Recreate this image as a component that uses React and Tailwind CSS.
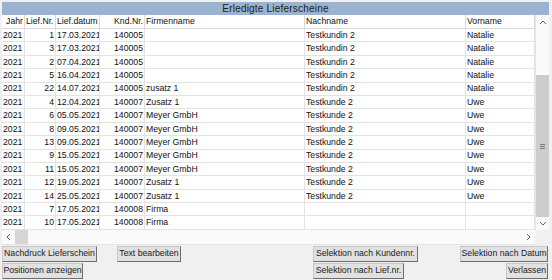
import React from "react";

const rows = [
  ["2021", "1", "17.03.2021", "140005", "", "Testkundin 2", "Natalie"],
  ["2021", "3", "17.03.2021", "140005", "", "Testkundin 2", "Natalie"],
  ["2021", "2", "07.04.2021", "140005", "", "Testkundin 2", "Natalie"],
  ["2021", "5", "16.04.2021", "140005", "", "Testkundin 2", "Natalie"],
  ["2021", "22", "14.07.2021", "140005", "zusatz 1", "Testkundin 2", "Natalie"],
  ["2021", "4", "12.04.2021", "140007", "Zusatz 1", "Testkunde 2", "Uwe"],
  ["2021", "6", "05.05.2021", "140007", "Meyer GmbH", "Testkunde 2", "Uwe"],
  ["2021", "8", "09.05.2021", "140007", "Meyer GmbH", "Testkunde 2", "Uwe"],
  ["2021", "13", "09.05.2021", "140007", "Meyer GmbH", "Testkunde 2", "Uwe"],
  ["2021", "9", "15.05.2021", "140007", "Meyer GmbH", "Testkunde 2", "Uwe"],
  ["2021", "11", "15.05.2021", "140007", "Meyer GmbH", "Testkunde 2", "Uwe"],
  ["2021", "12", "19.05.2021", "140007", "Zusatz 1", "Testkunde 2", "Uwe"],
  ["2021", "14", "25.05.2021", "140007", "Zusatz 1", "Testkunde 2", "Uwe"],
  ["2021", "7", "17.05.2021", "140008", "Firma", "", ""],
  ["2021", "10", "17.05.2021", "140008", "Firma", "", ""],
];

const headers = ["Jahr", "Lief.Nr.", "Lief.datum", "Knd.Nr.", "Firmenname", "Nachname", "Vorname"];
const headAlign = ["justify-end", "justify-start", "justify-start", "justify-end", "justify-start", "justify-start", "justify-start"];
const cellAlign = ["justify-start", "justify-end", "justify-start", "justify-end", "justify-start", "justify-start", "justify-start"];

function Btn({ children, className = "" }) {
  return (
    <div
      className={
        "h-[16px] flex items-center justify-center bg-[#e1e1e1] border border-t-[#c8c8c8] border-l-[#c8c8c8] border-r-[#6e6e6e] border-b-[#6e6e6e] text-[8.7px] text-[#1a1a1a] whitespace-nowrap " +
        className
      }
    >
      {children}
    </div>
  );
}

function Chevron({ dir }) {
  const pts = {
    up: "1,5 4,2 7,5",
    down: "1,2 4,5 7,2",
    left: "5,1 2,4 5,7",
    right: "2,1 5,4 2,7",
  }[dir];
  const vb = dir === "up" || dir === "down" ? "0 0 8 7" : "0 0 7 8";
  const cls = dir === "up" || dir === "down" ? "w-[8px] h-[7px]" : "w-[7px] h-[8px]";
  return (
    <svg viewBox={vb} className={cls}>
      <polyline points={pts} fill="none" stroke="#606060" strokeWidth="1" />
    </svg>
  );
}

export default function App() {
  return (
    <div
      className="w-[552px] h-[280px] bg-[#f0f0f0] pt-[2px] pl-[2px] pr-[3px] overflow-hidden text-[#111]"
      style={{ fontFamily: '"Liberation Sans", Arial, sans-serif' }}
    >
      <div className="h-[13px] bg-[#99b4d1] flex items-center justify-center text-[10px] tracking-[0.2px] text-[#1a1a1a]">
        Erledigte Lieferscheine
      </div>
      <div className="flex">
        <div className="w-[533px] bg-white">
          <div className="grid grid-cols-[23px_31px_44px_45px_160px_161px_69px] h-[14px]">
            {headers.map((h, i) => (
              <div
                key={i}
                className={
                  "flex items-center px-[1px] border-r border-b border-[#d9d9d9] text-[8.7px] leading-none " +
                  headAlign[i]
                }
              >
                {h}
              </div>
            ))}
          </div>
          {rows.map((r, ri) => (
            <div key={ri} className="grid grid-cols-[23px_31px_44px_45px_160px_161px_69px] h-[13.4px]">
              {r.map((c, ci) => (
                <div
                  key={ci}
                  className={
                    "flex items-center px-[1px] border-r border-b border-[#e3e3e3] text-[8.7px] leading-none whitespace-nowrap overflow-hidden " +
                    cellAlign[ci]
                  }
                >
                  {c}
                </div>
              ))}
            </div>
          ))}
        </div>
        <div className="w-[14px] flex flex-col bg-[#fafafa] border-l border-[#e6e6e6]">
          <div className="h-[14px] flex items-center justify-center">
            <Chevron dir="up" />
          </div>
          <div className="h-[46px]" />
          <div className="h-[142px] bg-[#cdcdcd] flex items-center justify-center">
            <div className="flex flex-col gap-[1px]">
              <div className="w-[5px] h-[1px] bg-[#7a7a7a]" />
              <div className="w-[5px] h-[1px] bg-[#7a7a7a]" />
              <div className="w-[5px] h-[1px] bg-[#7a7a7a]" />
            </div>
          </div>
          <div className="h-[13px] flex items-center justify-center">
            <Chevron dir="down" />
          </div>
        </div>
      </div>
      <div className="flex h-[15px]">
        <div className="w-[533px] flex bg-[#fafafa] border-b border-[#e3e3e3]">
          <div className="w-[13px] flex items-center justify-center">
            <Chevron dir="left" />
          </div>
          <div className="w-[13px] bg-[#d6d6d6]" />
          <div className="flex-1" />
          <div className="w-[13px] flex items-center justify-center">
            <Chevron dir="right" />
          </div>
        </div>
        <div className="w-[14px] bg-[#f0f0f0]" />
      </div>
      <div className="flex mt-[1px]">
        <Btn className="w-[95px]">Nachdruck Lieferschein</Btn>
        <Btn className="w-[64px] ml-[20px]">Text bearbeiten</Btn>
        <Btn className="w-[105px] ml-[132px]">Selektion nach Kundennr.</Btn>
        <Btn className="w-[88px] ml-[42px]">Selektion nach Datum</Btn>
      </div>
      <div className="flex mt-[1px]">
        <Btn className="w-[81px]">Positionen anzeigen</Btn>
        <Btn className="w-[91px] ml-[230px]">Selektion nach Lief.nr.</Btn>
        <Btn className="w-[42px] ml-[102px]">Verlassen</Btn>
      </div>
    </div>
  );
}
